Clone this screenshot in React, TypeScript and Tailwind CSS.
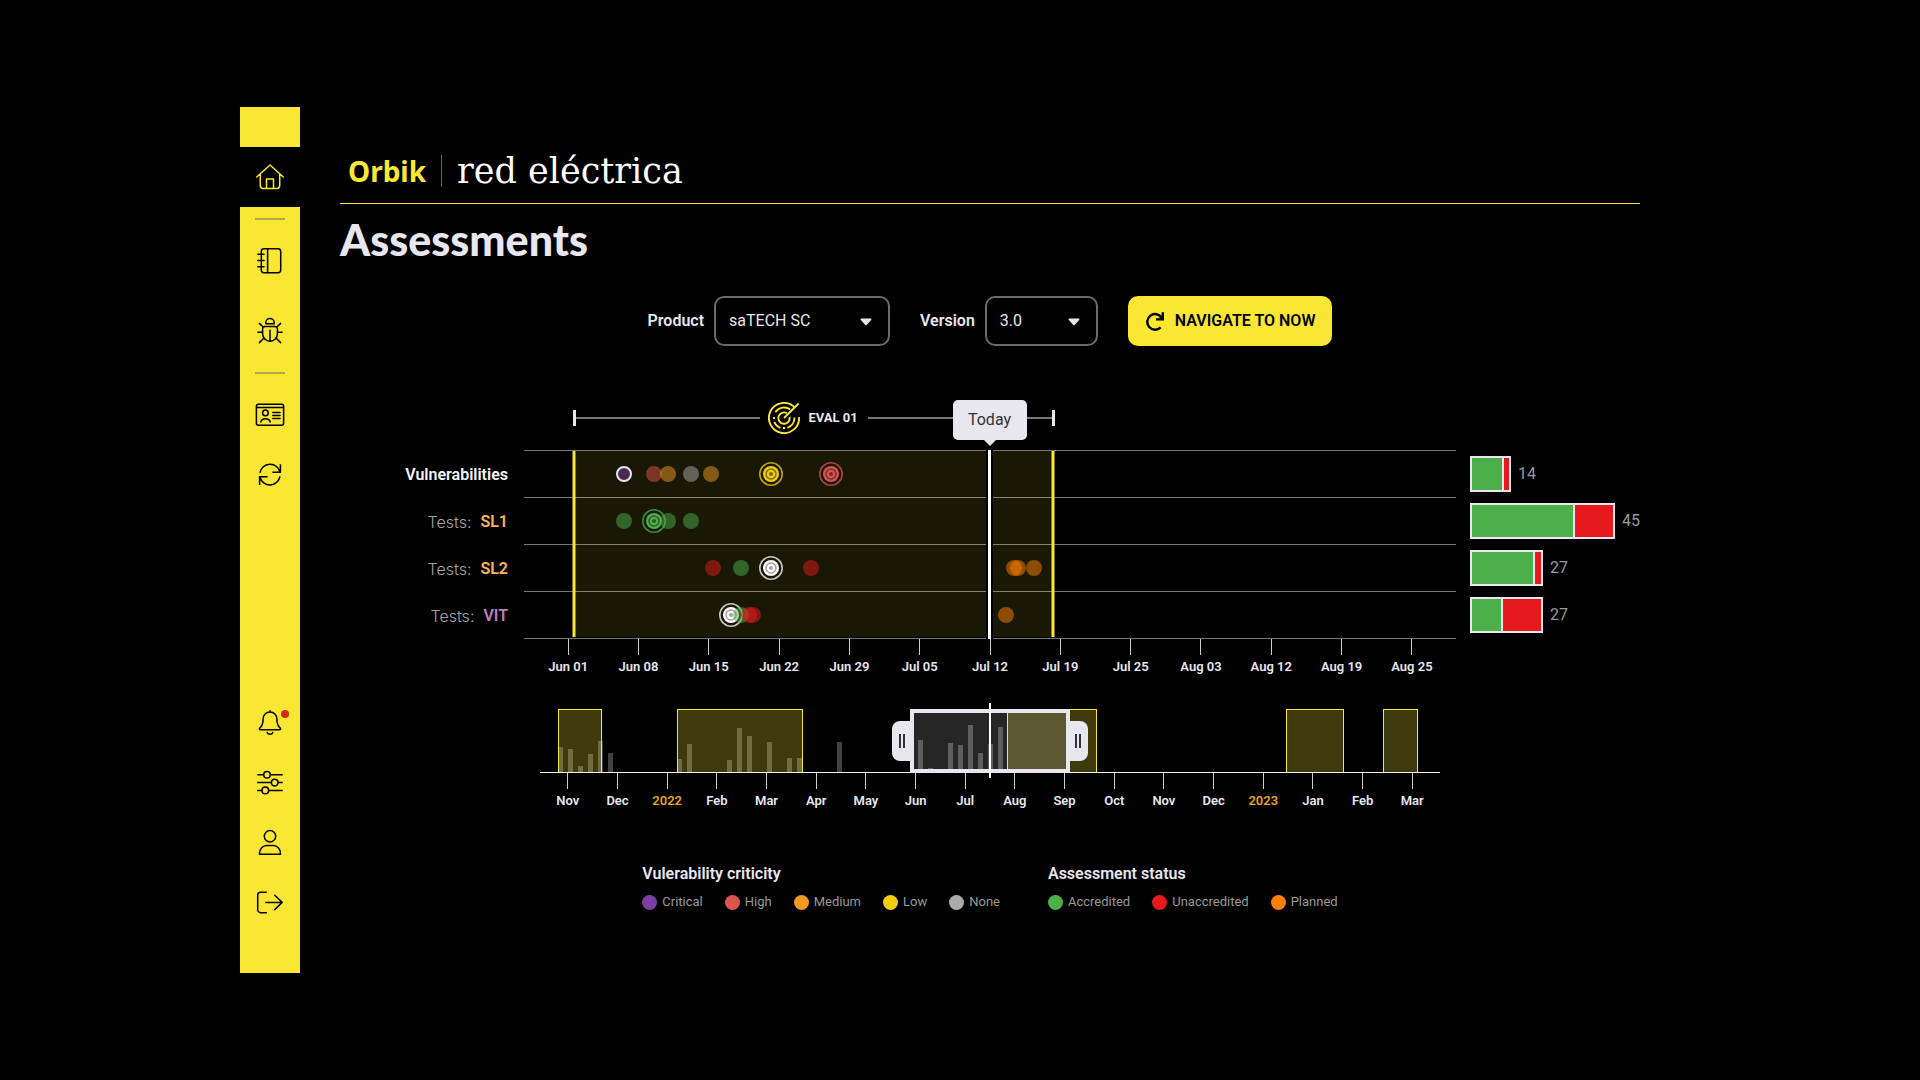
import { useState } from "react";
import type { ReactNode } from "react";

const CHART_WIDTH = 932;
const OVERVIEW_WIDTH = 900;

const RANGE = { start: 50, end: 529 };
const TODAY = 465.5;

const COLORS = {
    critical: "#7b3fa5",
    high: "#dd5350",
    medium: "#f09a23",
    low: "#f4cd0c",
    none: "#aaaaaa",
    accredited: "#4daf4a",
    unaccredited: "#e6191c",
    planned: "#ff7f00",
    white: "#ffffff",
};

type Dot = { x: number; color: keyof typeof COLORS; kind?: "target" | "outlined" };

type Row = {
    id: string;
    prefix?: string;
    label: string;
    labelClass: string;
    dots: Dot[];
    total: number;
    passed: number;
    failed: number;
};

const ROWS: Row[] = [
    {
        id: "vulnerabilities",
        label: "Vulnerabilities",
        labelClass: "text-[#f5f5f5]",
        dots: [
            { x: 100, color: "critical", kind: "outlined" },
            { x: 130, color: "high" },
            { x: 144, color: "medium" },
            { x: 167, color: "none" },
            { x: 187, color: "medium" },
            { x: 247, color: "low", kind: "target" },
            { x: 307, color: "high", kind: "target" },
        ],
        total: 14,
        passed: 30,
        failed: 5,
    },
    {
        id: "sl1",
        prefix: "Tests:",
        label: "SL1",
        labelClass: "text-[#fdb462]",
        dots: [
            { x: 100, color: "accredited" },
            { x: 130, color: "accredited", kind: "target" },
            { x: 144, color: "accredited" },
            { x: 167, color: "accredited" },
        ],
        total: 45,
        passed: 101,
        failed: 38,
    },
    {
        id: "sl2",
        prefix: "Tests:",
        label: "SL2",
        labelClass: "text-[#fdb462]",
        dots: [
            { x: 189, color: "unaccredited" },
            { x: 217, color: "accredited" },
            { x: 247, color: "white", kind: "target" },
            { x: 287, color: "unaccredited" },
            { x: 490, color: "planned" },
            { x: 494, color: "planned" },
            { x: 510, color: "planned" },
        ],
        total: 27,
        passed: 61,
        failed: 6,
    },
    {
        id: "vit",
        prefix: "Tests:",
        label: "VIT",
        labelClass: "text-[#bc80bd]",
        dots: [
            { x: 207, color: "white", kind: "target" },
            { x: 217, color: "accredited" },
            { x: 225, color: "unaccredited" },
            { x: 229, color: "unaccredited" },
            { x: 482, color: "planned" },
        ],
        total: 27,
        passed: 29,
        failed: 38,
    },
];

const WEEKS = ["Jun 01", "Jun 08", "Jun 15", "Jun 22", "Jun 29", "Jul 05", "Jul 12", "Jul 19", "Jul 25", "Aug 03", "Aug 12", "Aug 19", "Aug 25"];

const MONTHS = ["Nov", "Dec", "2022", "Feb", "Mar", "Apr", "May", "Jun", "Jul", "Aug", "Sep", "Oct", "Nov", "Dec", "2023", "Jan", "Feb", "Mar"];

// Evaluation periods in the overview: [start, end]
const BANDS = [
    [18, 62],
    [137, 263],
    [467, 557],
    [746, 804],
    [843, 878],
];

// Activity in the overview: [x, height]
const ACTIVITY = [
    [18, 25], [28, 23], [38, 6], [48, 18], [58, 31], [68, 19],
    [137, 13], [147, 28], [187, 12], [197, 44], [207, 36], [227, 30], [247, 14], [257, 14],
    [297, 30],
    [378, 32], [388, 4], [408, 29], [418, 27], [428, 47], [438, 19], [448, 28], [458, 45],
];

const SELECTION = { start: 370, end: 530 };

const pct = (value: number, total: number) => `${(value / total) * 100}%`;

function NavIcon({ children }: { children: ReactNode }) {
    return (
        <svg
            viewBox="0 0 60 60"
            className="size-15"
            fill="none"
            stroke="currentColor"
            strokeWidth="1.5"
            strokeLinecap="round"
            strokeLinejoin="round"
        >
            {children}
        </svg>
    );
}

function NavLink({ label, active, children }: { label: string; active?: boolean; children: ReactNode }) {
    return (
        <a href="#" aria-label={label} className={active ? "block bg-black text-[#fae733]" : "block text-black"}>
            <NavIcon>{children}</NavIcon>
        </a>
    );
}

function NavDivider() {
    return (
        <div className="flex h-6 items-center justify-center">
            <span className="h-0.5 w-7.5 bg-[#b3a646]" />
        </div>
    );
}

function Sidebar() {
    return (
        <nav className="flex w-15 shrink-0 flex-col bg-[#fae733] pt-10 pb-[41px]">
            <NavLink label="Home" active>
                <path d="M16.7 30 30 18l13.3 12M20.3 27v11.5a3 3 0 0 0 3 3h13.4a3 3 0 0 0 3-3V27M26.5 41.3V32h7v9.3" />
            </NavLink>
            <NavDivider />
            <div className="flex flex-col gap-[10px]">
                <NavLink label="Assessments">
                    <rect x="21.3" y="17.8" width="19.4" height="23.9" rx="2.6" />
                    <path d="M27.6 17.8v23.9M17.8 23.3H24M17.8 29.5H24M17.8 35.7H24" />
                </NavLink>
                <NavLink label="Vulnerabilities">
                    <path d="M25.8 22.7v-1a4.2 4.2 0 0 1 8.4 0v1zM25 25.6h10a2.4 2.4 0 0 1 2.4 2.4v4.8a7.4 7.4 0 0 1-14.8 0V28a2.4 2.4 0 0 1 2.4-2.4zM30 29.3v10.6M17.9 31.3h4.7M37.4 31.3h4.7M19.4 22.4l4 3.9M40.6 22.4l-4 3.9M19.4 41.6l4.3-4.3M40.6 41.6l-4.3-4.3" />
                </NavLink>
            </div>
            <NavDivider />
            <NavLink label="Certificates">
                <rect x="16.4" y="19.2" width="27.2" height="21" rx="2" />
                <path d="M16.6 22.4h26.8M20.8 37a4.8 4 0 0 1 9.4 0M32.8 27.4H40M32.8 30.4H40M32.8 33.4H40" />
                <circle cx="25.4" cy="27.9" r="2.8" />
            </NavLink>
            <NavLink label="Sync">
                <path
                    d="M20 27.8a10.2 10.2 0 0 1 20-.8M40.4 19.2v8.1h-8M40 31.4a10.2 10.2 0 0 1-20 .6M19.6 39.9v-8.2h8"
                    strokeLinecap="butt"
                    strokeLinejoin="miter"
                />
            </NavLink>
            <div className="mt-auto flex flex-col">
                <NavLink label="Notifications">
                    <path d="M30 18.8V20c-4 0-6.9 3-6.9 7.2 0 5-.9 6.7-3.3 8.9-.9.9-.4 1.7.6 1.7h19.2c1 0 1.5-.8.6-1.7-2.4-2.2-3.3-3.9-3.3-8.9 0-4.2-2.9-7.2-6.9-7.2zM27.2 40.4a3 3 0 0 0 5.6 0" />
                    <circle cx="45" cy="22" r="4" fill="#d32912" stroke="none" />
                </NavLink>
                <NavLink label="Settings">
                    <path d="M17.8 22.8h5.9M30.4 22.8h11.8M17.8 30.6h13.5M38 30.6h4.2M17.8 38.4H22M28.7 38.4h13.5" />
                    <circle cx="27" cy="22.8" r="3.3" />
                    <circle cx="34.7" cy="30.6" r="3.3" />
                    <circle cx="25.3" cy="38.4" r="3.3" />
                </NavLink>
                <NavLink label="Profile">
                    <circle cx="30" cy="24.2" r="5.7" />
                    <path d="M19.5 42.2v-.8c0-4.2 3-7.8 7-7.8h7c4 0 7 3.6 7 7.8v.8z" />
                </NavLink>
                <NavLink label="Log out">
                    <path d="M26.3 20.2h-5.6a3 3 0 0 0-3 3v14.5a3 3 0 0 0 3 3h5.6M25.8 30.4h16.4M34.7 23.2l7.5 7.2-7.5 7.2" />
                </NavLink>
            </div>
        </nav>
    );
}

function SelectField({ id, label, value, options, onChange, widthClass }: {
    id: string;
    label: string;
    value: string;
    options: string[];
    onChange: (value: string) => void;
    widthClass: string;
}) {
    return (
        <div className="flex items-center gap-[10px]">
            <label htmlFor={id} className="text-base font-semibold text-[#e8e6ee]">
                {label}
            </label>
            <div className={`relative ${widthClass}`}>
                <select
                    id={id}
                    value={value}
                    onChange={(e) => onChange(e.target.value)}
                    className="h-[50px] w-full appearance-none rounded-[10px] border-2 border-[#6b6b6b] bg-black pl-[13px] text-base text-[#e8e6ee]"
                >
                    {options.map((option) => (
                        <option key={option}>{option}</option>
                    ))}
                </select>
                <svg viewBox="0 0 12 8" className="pointer-events-none absolute top-[22px] right-[18px] h-2 w-3" fill="#e8e6ee">
                    <path d="M1.5.5h9c.9 0 1.3 1 .7 1.6L6.9 6.7a1.2 1.2 0 0 1-1.8 0L.8 2.1C.2 1.5.6.5 1.5.5z" />
                </svg>
            </div>
        </div>
    );
}

function EvalIcon() {
    return (
        <svg viewBox="0 0 32 32" className="size-8 shrink-0" fill="none" stroke="#fae733" strokeWidth="1.9">
            <path d="M26.3 4.9A15.1 15.1 0 1 0 31.1 15" />
            <path d="M22.3 7.6A10.4 10.4 0 0 0 7.3 10.3M6.3 19.8a10.4 10.4 0 0 0 6.2 6M19.5 25.8A10.4 10.4 0 0 0 26.4 15.5" />
            <path d="M18.9 11.2A5.7 5.7 0 1 0 21.6 15" />
            <path d="M16 16 30.6 1.5M6 15v2M15 26h2.2" />
        </svg>
    );
}

function Target({ cx, cy, color }: { cx: string; cy: number; color: string }) {
    const core = color === COLORS.white ? "#55524a" : "#1a1909";
    return (
        <g>
            <circle cx={cx} cy={cy} r="11.2" fill="none" stroke={color} strokeWidth="1.6" opacity="0.75" />
            <circle cx={cx} cy={cy} r="8" fill={color} />
            <circle cx={cx} cy={cy} r="5" fill="none" stroke={core} strokeWidth="1.5" opacity="0.55" />
            <circle cx={cx} cy={cy} r="2" fill={core} opacity="0.55" />
        </g>
    );
}

function Ticks({ labels }: { labels: string[] }) {
    return (
        <ol className="flex">
            {labels.map((label, i) => (
                <li key={i} className="flex flex-1 flex-col items-center">
                    <span className="h-4 w-px bg-[#d0d0d0]" />
                    <span
                        className={
                            /^\d+$/.test(label)
                                ? "mt-1 text-[13px] leading-4 font-semibold whitespace-nowrap text-[#e8a317]"
                                : "mt-1 text-[13px] leading-4 font-semibold whitespace-nowrap text-[#e8e6ee]"
                        }
                    >
                        {label}
                    </span>
                </li>
            ))}
        </ol>
    );
}

function Timeline() {
    return (
        <section className="mt-[54px] flex">
            {/* Row names */}
            <div className="w-[184px] shrink-0 pt-[51px] pr-4">
                {ROWS.map((row) => (
                    <div key={row.id} className="flex h-[47px] items-center justify-end gap-[9px] text-base">
                        {row.prefix && <span className="font-['Inter',sans-serif] font-light text-[#a3a3a3]">{row.prefix}</span>}
                        <span className={`font-semibold ${row.labelClass}`}>{row.label}</span>
                    </div>
                ))}
            </div>

            {/* Chart */}
            <div className="relative min-w-0 flex-1">
                <div className="h-[50px]">
                    <div
                        className="flex h-9 items-center"
                        style={{
                            marginLeft: pct(RANGE.start - 1, CHART_WIDTH),
                            width: pct(RANGE.end - RANGE.start + 3, CHART_WIDTH),
                        }}
                    >
                        <span className="h-4 w-[3px] bg-[#e8e6ee]" />
                        <span className="h-0.5 flex-1 bg-[#777777]" />
                        <span className="flex items-center gap-2 pr-[10px] pl-2">
                            <EvalIcon />
                            <span className="text-[13px] font-bold text-[#e8e6ee]">EVAL 01</span>
                        </span>
                        <span className="h-0.5 flex-1 bg-[#777777]" />
                        <span className="h-4 w-[3px] bg-[#e8e6ee]" />
                    </div>
                </div>

                <div className="relative border-b border-[#777777]">
                    {ROWS.map((row) => (
                        <div key={row.id} className="h-[47px] border-t border-[#777777]" />
                    ))}
                    <svg className="absolute inset-0 h-full w-full overflow-visible">
                        <rect
                            x={pct(RANGE.start, CHART_WIDTH)}
                            y="1"
                            width={pct(RANGE.end - RANGE.start, CHART_WIDTH)}
                            height="186"
                            fill="#fae733"
                            fillOpacity="0.1"
                        />
                        {[RANGE.start, RANGE.end].map((x) => (
                            <line
                                key={x}
                                x1={pct(x, CHART_WIDTH)}
                                x2={pct(x, CHART_WIDTH)}
                                y1="1"
                                y2="187"
                                stroke="#fae733"
                                strokeWidth="3"
                            />
                        ))}
                        <line x1={pct(TODAY, CHART_WIDTH)} x2={pct(TODAY, CHART_WIDTH)} y1="0" y2="189" stroke="#000000" strokeWidth="7" />
                        <line x1={pct(TODAY, CHART_WIDTH)} x2={pct(TODAY, CHART_WIDTH)} y1="0" y2="189" stroke="#ffffff" strokeWidth="3" />
                        {ROWS.map((row, i) => (
                            <g key={row.id}>
                                {row.dots.map((dot, j) => {
                                    const cx = pct(dot.x, CHART_WIDTH);
                                    const cy = 24 + i * 47;
                                    if (dot.kind === "target") {
                                        return <Target key={j} cx={cx} cy={cy} color={COLORS[dot.color]} />;
                                    }
                                    if (dot.kind === "outlined") {
                                        return <circle key={j} cx={cx} cy={cy} r="7" fill="#4a2a55" stroke="#e8e6ee" strokeWidth="2" />;
                                    }
                                    return <circle key={j} cx={cx} cy={cy} r="8" fill={COLORS[dot.color]} opacity="0.5" />;
                                })}
                            </g>
                        ))}
                    </svg>
                </div>

                <div className="px-[9px]">
                    <Ticks labels={WEEKS} />
                </div>

                {/* Today marker */}
                <div className="absolute top-0 -translate-x-1/2" style={{ left: pct(TODAY, CHART_WIDTH) }}>
                    <div className="flex h-10 w-[74px] items-center justify-center rounded-[5px] bg-[#e8e6ee] text-base text-[#333333]">
                        Today
                    </div>
                    <svg viewBox="0 0 12 6" className="mx-auto h-1.5 w-3" fill="#e8e6ee">
                        <path d="M0 0h12L6 6z" />
                    </svg>
                </div>
            </div>

            {/* Totals */}
            <div className="w-[184px] shrink-0 pt-[50px] pl-[14px]">
                {ROWS.map((row) => (
                    <div key={row.id} className="flex h-[47px] items-center gap-[7px]">
                        <div className="flex h-9 gap-0.5 border-2 border-[#e8e6ee] bg-[#e8e6ee]">
                            <span className="bg-[#4daf4a]" style={{ width: row.passed }} />
                            <span className="bg-[#e6191c]" style={{ width: row.failed }} />
                        </div>
                        <span className="text-base text-[#9a9a9a]">{row.total}</span>
                    </div>
                ))}
            </div>
        </section>
    );
}

function Handle({ label, side, x }: { label: string; side: "left" | "right"; x: number }) {
    return (
        <button
            type="button"
            aria-label={label}
            className={
                side === "left"
                    ? "absolute top-[18px] flex h-10 w-5 -translate-x-full items-center justify-center gap-0.5 rounded-l-lg bg-[#e8e6ee]"
                    : "absolute top-[18px] flex h-10 w-5 items-center justify-center gap-0.5 rounded-r-lg bg-[#e8e6ee]"
            }
            style={{ left: pct(x, OVERVIEW_WIDTH) }}
        >
            <span className="h-3.5 w-0.5 bg-[#333333]" />
            <span className="h-3.5 w-0.5 bg-[#333333]" />
        </button>
    );
}

function Overview() {
    return (
        <section className="mx-[200px] mt-7">
            <div className="relative h-[70px] border-b border-[#f0f0f0]">
                <svg className="absolute inset-0 h-full w-full overflow-visible">
                    {ACTIVITY.map(([x, height]) => (
                        <rect key={x} x={pct(x, OVERVIEW_WIDTH)} y={69 - height} width="5" height={height} fill="#424244" />
                    ))}
                    {BANDS.map(([start, end]) => (
                        <g key={start} fill="#fae733">
                            <rect
                                x={pct(start, OVERVIEW_WIDTH)}
                                y="6"
                                width={pct(end - start, OVERVIEW_WIDTH)}
                                height="63"
                                fillOpacity="0.25"
                            />
                            <rect x={pct(start, OVERVIEW_WIDTH)} y="6" width="1" height="63" />
                            <rect x={pct(end - 1, OVERVIEW_WIDTH)} y="6" width="1" height="63" />
                            <rect x={pct(start, OVERVIEW_WIDTH)} y="6" width={pct(end - start, OVERVIEW_WIDTH)} height="1" />
                        </g>
                    ))}
                </svg>
                <div
                    className="absolute top-1.5 -bottom-px border-4 border-[#e8e6ee] bg-white/15"
                    style={{
                        left: pct(SELECTION.start, OVERVIEW_WIDTH),
                        width: pct(SELECTION.end - SELECTION.start, OVERVIEW_WIDTH),
                    }}
                />
                <Handle label="Selection start" side="left" x={SELECTION.start + 2} />
                <Handle label="Selection end" side="right" x={SELECTION.end - 2} />
                <span className="absolute top-0 -bottom-1.5 w-0.5 bg-white" style={{ left: pct(449, OVERVIEW_WIDTH) }} />
            </div>
            <div className="px-[3px]">
                <Ticks labels={MONTHS} />
            </div>
        </section>
    );
}

function Legend({ title, items }: { title: string; items: { label: string; dotClass: string }[] }) {
    return (
        <div>
            <h2 className="text-base leading-5 font-semibold text-[#e8e6ee]">{title}</h2>
            <ul className="mt-2 flex gap-[22px]">
                {items.map((item) => (
                    <li key={item.label} className="flex items-center gap-[5px] text-[13px] leading-5 text-[#9a9a9a]">
                        <span className={`size-[15px] rounded-full ${item.dotClass}`} />
                        {item.label}
                    </li>
                ))}
            </ul>
        </div>
    );
}

export default function App() {
    const [product, setProduct] = useState("saTECH SC");
    const [version, setVersion] = useState("3.0");

    return (
        <div className="min-h-screen bg-black font-['Roboto',sans-serif]">
            <div className="mx-auto flex min-h-screen max-w-[1440px] py-[107px]">
                <Sidebar />

                <main className="min-w-0 flex-1 px-10">
                    <header className="flex h-[97px] items-end border-b border-[#fae733] pb-4">
                        <div className="flex h-8 items-center pl-2">
                            <span className="font-['Noto_Sans',sans-serif] text-[28px] leading-8 font-bold text-[#fae733]">Orbik</span>
                            <span className="mx-[15px] h-8 w-px bg-[#666666]" />
                            <span className="font-['DejaVu_Serif',serif] text-[35px] leading-7 text-white">red eléctrica</span>
                        </div>
                    </header>

                    <h1 className="mt-3 font-['Lato',sans-serif] text-[43px] leading-[48px] font-black text-[#e8e6ee]">Assessments</h1>

                    <div className="mt-8 flex items-center justify-center gap-[30px]">
                        <SelectField
                            id="product"
                            label="Product"
                            value={product}
                            options={["saTECH SC"]}
                            onChange={setProduct}
                            widthClass="w-44"
                        />
                        <SelectField id="version" label="Version" value={version} options={["3.0"]} onChange={setVersion} widthClass="w-[113px]" />
                        <button type="button" className="flex h-[50px] items-center gap-[10px] rounded-[10px] bg-[#fae733] px-[17px] text-base font-semibold text-black">
                            <svg viewBox="0 0 20 20" className="size-5" fill="none" stroke="currentColor" strokeWidth="2.4">
                                <path d="M15.6 16.4A7.8 7.8 0 1 1 16.6 6.6" />
                                <path d="M17.8 1.2v7.2h-6.8" />
                                <path d="M13.4 7.6 17.8 3.4v4.6z" fill="currentColor" stroke="none" />
                            </svg>
                            NAVIGATE TO NOW
                        </button>
                    </div>

                    <Timeline />
                    <Overview />

                    <div className="mt-[55px] flex justify-center gap-12">
                        <Legend
                            title="Vulerability criticity"
                            items={[
                                { label: "Critical", dotClass: "bg-[#7b3fa5]" },
                                { label: "High", dotClass: "bg-[#dd5350]" },
                                { label: "Medium", dotClass: "bg-[#f09a23]" },
                                { label: "Low", dotClass: "bg-[#f4cd0c]" },
                                { label: "None", dotClass: "bg-[#aaaaaa]" },
                            ]}
                        />
                        <Legend
                            title="Assessment status"
                            items={[
                                { label: "Accredited", dotClass: "bg-[#4daf4a]" },
                                { label: "Unaccredited", dotClass: "bg-[#e6191c]" },
                                { label: "Planned", dotClass: "bg-[#ff7f00]" },
                            ]}
                        />
                    </div>
                </main>
            </div>
        </div>
    );
}
